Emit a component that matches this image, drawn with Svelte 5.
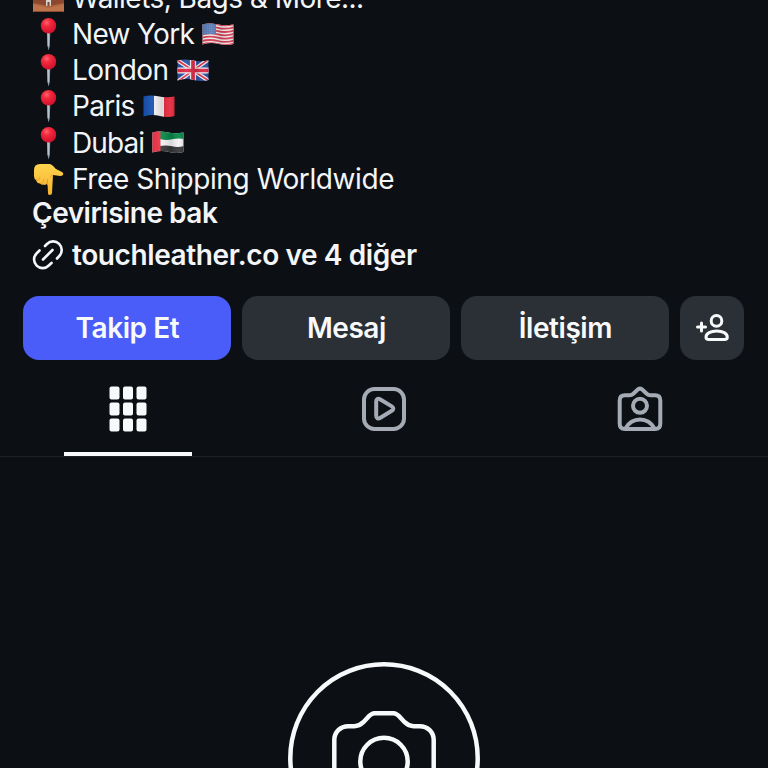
<script>
  const places = [
    { name: 'New York', flag: 'us' },
    { name: 'London', flag: 'gb' },
    { name: 'Paris', flag: 'fr' },
    { name: 'Dubai', flag: 'ae' }
  ];

  const actions = [
    { label: 'Takip Et', primary: true },
    { label: 'Mesaj' },
    { label: 'İletişim' }
  ];

  const wave = 'M.500 1.500 Q7 -.5 15 1.300 T31.500 1.500 V21 Q25 23 17 21 T.500 21.500 Z';
  let active = $state('grid');
</script>

{#snippet flag(code)}
  <svg class="flag" viewBox="0 0 32 23">
    <defs>
      <clipPath id="flag-{code}"><path d={wave} /></clipPath>
      <linearGradient id="shade-{code}">
        <stop offset="0" stop-color="#000" stop-opacity=".04" />
        <stop offset=".28" stop-color="#fff" stop-opacity=".08" />
        <stop offset=".6" stop-color="#000" stop-opacity=".12" />
        <stop offset=".85" stop-color="#fff" stop-opacity=".06" />
        <stop offset="1" stop-color="#000" stop-opacity=".15" />
      </linearGradient>
    </defs>
    <g clip-path="url(#flag-{code})">
      {#if code === 'us'}
        <path fill="#f2e9ec" d="M0 0h32v23H0z" />
        {#each [1.5, 4.8, 8.1, 11.4, 14.7, 18, 21.2] as y}
          <path d="M0 {y} Q8 {y - 2} 16 {y} T32 {y - 0.5}" fill="none" stroke="#d43c50" stroke-width="1.800" />
        {/each}
        <path fill="#5478b3" d="M0 0h14v11.500Q7 10.500 0 12z" />
        {#each [3, 5.3, 7.6, 9.8] as y}
          <path d="M2.500 {y}H13" stroke="#8aa4d2" stroke-width=".8" stroke-dasharray=".8 1.500" />
        {/each}
      {:else if code === 'gb'}
        <path fill="#2850a0" d="M0 0h32v23H0z" />
        <path d="M0 1 32 22M32 0 0 23" stroke="#f4eff3" stroke-width="4" />
        <path d="M0 1 32 22M32 0 0 23" stroke="#da3048" stroke-width="1.600" />
        <path d="M16 0v23M0 11.500h32" stroke="#f4eff3" stroke-width="6.200" />
        <path d="M16 0v23M0 11.500h32" stroke="#dc2845" stroke-width="3.700" />
      {:else if code === 'fr'}
        <path fill="#1550b0" d="M0 0h11v23H0z" />
        <path fill="#f4f2f5" d="M11 0h10v23H11z" />
        <path fill="#e5293d" d="M21 0h11v23H21z" />
      {:else}
        <path fill="#f4f2f5" d="M0 0h32v23H0z" />
        <path fill="#078747" d="M8 0h24v8q-6-1-12 .3T8 8z" />
        <path fill="#343637" d="M8 15q6-1 12 .3t12-.3v8H8z" />
        <path fill="#ec3548" d="M0 0h8.500v23H0z" />
      {/if}
      <path fill="url(#shade-{code})" d="M0 0h32v23H0z" />
    </g>
  </svg>
{/snippet}

<main>
  <section class="bio">
    <div class="line">
      <svg class="emoji" viewBox="0 0 32 36">
        <rect x="1" y="8" width="31" height="24" rx="2" fill="#ae653e" />
        <path fill="#8b482d" d="M1 16h31v7L17 26 1 23z" />
        <path fill="#bd744b" d="M1 24.500 16.500 28 32 24.500V32H1z" />
        <rect x="14" y="19" width="5" height="7" rx="1" fill="#d7d5d2" />
        <path fill="#79452f" d="M15.500 22h2v4h-2z" />
        <path d="M1.500 31.500h30" stroke="#8a4b30" />
      </svg>
      <span class="wallets">Wallets, Bags &amp; More...</span>
    </div>
    {#each places as place}
      <div class="line">
        <svg class="emoji" viewBox="0 0 32 36">
          <defs>
            <radialGradient id="head-{place.flag}" cx=".38" cy=".3" r=".7">
              <stop offset="0" stop-color="#ff6470" />
              <stop offset=".35" stop-color="#f22a3d" />
              <stop offset="1" stop-color="#d0102d" />
            </radialGradient>
          </defs>
          <path fill="#8f9eac" d="M14.900 15h3.400l-.5 15-1.200 4.500-1.100-4.500z" />
          <path d="M16.200 17v13" stroke="#cbd5dc" />
          <circle cx="16.500" cy="9.700" r="7.700" fill="url(#head-{place.flag})" />
        </svg>
        <span class={place.flag}>{place.name}</span>
        {@render flag(place.flag)}
      </div>
    {/each}
    <div class="line">
      <svg class="emoji" viewBox="0 0 32 36">
        <defs>
          <linearGradient id="skin" x2="0" y2="1">
            <stop offset="0" stop-color="#ffd34e" />
            <stop offset="1" stop-color="#f6b22e" />
          </linearGradient>
        </defs>
        <path fill="url(#skin)" d="M2 9Q2 3 8 3h8c4 0 5 2 8 5l6 3q2 1 1 3-1 1-3 1l-7-1-1 18q0 2-2.200 2T16 32l-.5-10q-1 2-3.500 1.500-2 1-4-1-3 0-4-3.500-2-1-2-4z" />
        <path fill="none" stroke="#e9a02f" d="M4 18q3 3 4-2M8 22q3 2 4-4M12 23.500q3 .5 3.500-5M15.500 18v6M21 14l-3 1.500" />
      </svg>
      <span class="shipping">Free Shipping Worldwide</span>
    </div>
    <strong class="translate">Çevirisine bak</strong>
    <div class="link">
      <svg class="chain" viewBox="0 0 32 32" fill="none" stroke="#f5f7fa" stroke-width="2.600" stroke-linecap="round">
        <path d="M11 20.500 20.500 11" />
        <path d="m13 7 2-2a8.500 8.500 0 0 1 12.300 12l-2.300 2.500" />
        <path d="m7.500 11.500-3 3a8.500 8.500 0 0 0 12.300 12l2.700-2.500" />
      </svg>
      <strong>touchleather.co ve 4 diğer</strong>
    </div>
  </section>

  <div class="actions">
    {#each actions as action}
      <button class="action" class:primary={action.primary}>{action.label}</button>
    {/each}
    <button class="suggest" aria-label="Önerilen kişiler">
      <svg viewBox="0 0 34 28" fill="none" stroke="#f8f9fb" stroke-width="3" stroke-linecap="round">
        <path d="M2.500 13h8M6.500 9v8" />
        <circle cx="21.500" cy="6.900" r="5.300" />
        <path stroke-linejoin="round" d="M11 23.200c0-3.700 4.700-6.300 10.700-6.300s10.600 2.600 10.600 6.300c0 1.500-1.200 2.300-2.900 2.300H13.900c-1.700 0-2.900-.8-2.900-2.300z" />
      </svg>
    </button>
  </div>

  <nav>
    <button class="tab" class:active={active === 'grid'} aria-label="Gönderiler" onclick={() => (active = 'grid')}>
      <svg viewBox="0 0 48 48" fill="currentColor">
        {#each [1.5, 17.5, 33.5] as y}
          {#each [5.5, 19, 32.5] as x}
            <rect {x} {y} width="10" height="13" rx="2" />
          {/each}
        {/each}
      </svg>
    </button>
    <button class="tab" class:active={active === 'reels'} aria-label="Reels" onclick={() => (active = 'reels')}>
      <svg viewBox="0 0 48 48" fill="none" stroke="currentColor" stroke-width="4">
        <rect x="4" y="4" width="40" height="40" rx="10.500" />
        <path stroke-linejoin="round" d="M16.200 16.500c0-2.500 1.800-3.500 3.800-2.300l11.800 7.200c2 1.200 2 3.200 0 4.400L20 33c-2 1.200-3.800.2-3.800-2.300z" />
      </svg>
    </button>
    <button class="tab" class:active={active === 'tagged'} aria-label="Etiketlenenler" onclick={() => (active = 'tagged')}>
      <svg viewBox="0 0 48 48" fill="none" stroke="currentColor" stroke-width="4" stroke-linejoin="round">
        <path d="M9 10.200h4.500q2.200 0 3.800-1.500l3.700-3.500q3-3 6 0l3.700 3.500q1.600 1.500 3.800 1.500H39q5.300 0 5.300 5.300v23.200q0 5.300-5.300 5.300H9q-5.300 0-5.300-5.300V15.500q0-5.300 5.300-5.300z" />
        <circle cx="24" cy="20.800" r="7" />
        <path d="M9.500 43.500c3-5.500 8-9 14.500-9s11.500 3.500 14.500 9" />
      </svg>
    </button>
  </nav>

  <section class="empty">
    <svg viewBox="0 0 192 192" fill="none" stroke="#f8f9fb" stroke-width="4.500">
      <circle cx="96" cy="96" r="93.700" />
      <path stroke-linejoin="round" d="M46.300 128V78.200c0-8 6-14 14-14h6c4 0 6.500-1.500 9-4l3.500-3.800c3.500-4 5-5.100 8-5.100h18.400c3 0 4.500 1.100 8 5.100l3.500 3.800c2.500 2.500 5 4 9 4h6c8 0 14 6 14 14V128c0 8-6 14-14 14H60.300c-8 0-14-6-14-14z" />
      <circle cx="96" cy="99.500" r="23.700" />
    </svg>
  </section>
</main>

<style>
  :global(body) {
    background: #0c1014;
  }

  main {
    height: 768px;
    overflow: hidden;
    background: #0c1014;
    color: #f3f5f8;
    font-family: Inter, 'Liberation Sans', sans-serif;
    font-size: 28px;
  }

  svg {
    display: block;
    flex: none;
  }

  .bio {
    height: 296.4px;
    box-sizing: border-box;
    padding-left: 32px;
    overflow: hidden;
  }

  .line {
    display: flex;
    align-items: center;
    height: 36.2px;
    white-space: pre;
    letter-spacing: -0.4px;
  }

  .line:first-child {
    margin-top: -20.2px;
  }

  .wallets {
    letter-spacing: -0.53px;
  }

  .us,
  .fr {
    letter-spacing: -0.7px;
  }

  .ae {
    letter-spacing: -0.9px;
  }

  .gb {
    letter-spacing: -0.5px;
  }

  .emoji {
    width: 32px;
    height: 36px;
    margin-right: 8px;
  }

  .flag {
    width: 32px;
    height: 23px;
    margin-left: 8px;
  }

  .translate {
    display: block;
    height: 34px;
    line-height: 34px;
    margin-top: -1px;
  }

  strong {
    font-weight: 600;
    letter-spacing: -0.4px;
  }

  .translate {
    letter-spacing: -0.5px;
  }

  .link {
    display: flex;
    align-items: center;
    height: 34px;
    margin-top: 8px;
  }

  .chain {
    width: 32px;
    height: 32px;
    margin-right: 8px;
  }

  .actions {
    display: flex;
    gap: 11px;
    padding: 0 23.6px 0 23.4px;
  }

  button {
    font: inherit;
    border: 0;
    padding: 0;
    color: #f8f9fb;
    background: transparent;
    cursor: pointer;
  }

  .action,
  .suggest {
    height: 64px;
    border-radius: 16px;
    background: #2b3036;
    font-weight: 600;
    letter-spacing: -0.45px;
  }

  .action {
    flex: 1;
  }

  .primary {
    background: #4a5df9;
  }

  .suggest {
    display: grid;
    place-items: center;
    width: 64px;
  }

  .suggest svg {
    width: 34px;
    height: 28px;
  }

  nav {
    display: flex;
    height: 95.6px;
    border-bottom: 1px solid #1d2126;
  }

  .tab {
    flex: 1;
    display: flex;
    flex-direction: column;
    align-items: center;
    justify-content: space-between;
    padding-top: 24.6px;
    color: #a5abb5;
  }

  .tab svg {
    width: 48px;
    height: 48px;
  }

  .tab::after {
    content: '';
    width: 128px;
    height: 4px;
  }

  .tab.active {
    color: #f8f9fb;
  }

  .tab.active::after {
    background: #f8f9fb;
  }

  .empty {
    display: flex;
    justify-content: center;
    padding-top: 205px;
  }

  .empty svg {
    width: 192px;
    height: 192px;
  }
</style>
